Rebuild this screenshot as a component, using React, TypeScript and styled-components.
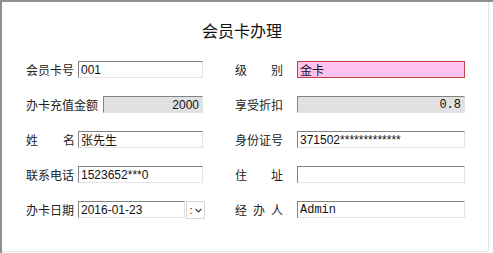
import React from 'react'
import styled, { createGlobalStyle } from 'styled-components'

const GlobalStyle = createGlobalStyle`
  html, body {
    margin: 0;
    padding: 0;
    background: #fff;
  }
  body {
    font-family: "Noto Sans CJK SC", "Liberation Sans", sans-serif;
    font-size: 12px;
    color: #222;
  }
`

const Window = styled.div`
  width: 493px;
  height: 253px;
  box-sizing: border-box;
  border-left: 2px solid #8e8e8e;
  border-top: 2px solid #8e8e8e;
  background: #fff;
`

const Panel = styled.div`
  width: 487px;
  height: 250px;
  box-sizing: border-box;
  border-right: 1px solid #e6e6e6;
  border-bottom: 1px solid #e6e6e6;
  display: flex;
  flex-direction: column;
`

const Title = styled.div`
  padding-top: 19px;
  padding-right: 6px;
  height: 18px;
  line-height: 18px;
  font-size: 16px;
  text-align: center;
  color: #111;
`

const Form = styled.div`
  margin-top: 22px;
  padding-left: 24px;
  display: grid;
  grid-template-columns: 177px 230px;
  column-gap: 32px;
  row-gap: 18px;
`

const Field = styled.div`
  display: flex;
  align-items: center;
  height: 17px;
  min-width: 0;
`

const Label = styled.label<{ $width: number; $gap?: number }>`
  width: ${(p) => p.$width}px;
  flex: none;
  display: flex;
  justify-content: space-between;
  padding-right: ${(p) => p.$gap ?? 3}px;
  box-sizing: border-box;
  line-height: 17px;
  white-space: nowrap;
`

type Tone = 'plain' | 'gray' | 'pink'

const Box = styled.input<{ $tone?: Tone; $align?: 'left' | 'right'; $mono?: boolean }>`
  flex: 1;
  width: 0;
  min-width: 0;
  height: 17px;
  box-sizing: border-box;
  margin: 0;
  padding: 0 3px 0 2px;
  outline: none;
  font-family: ${(p) =>
    p.$mono ? '"Liberation Mono", "Noto Sans CJK SC", monospace' : '"Liberation Sans", "Noto Sans CJK SC", sans-serif'};
  font-size: 12px;
  color: #111;
  text-align: ${(p) => p.$align ?? 'left'};
  background: ${(p) => (p.$tone === 'gray' ? '#e1e1e1' : p.$tone === 'pink' ? '#ffc2f0' : '#fff')};
  border: 1px solid;
  border-color: ${(p) =>
    p.$tone === 'pink' ? '#c0404c' : '#828282 #e3e3e3 #e3e3e3 #828282'};
`

const DateWrap = styled.div`
  flex: 1;
  min-width: 0;
  display: flex;
  gap: 1px;
  margin-right: -2px;
  height: 17px;
`

const DropButton = styled.div`
  width: 19px;
  flex: none;
  height: 18px;
  box-sizing: border-box;
  border: 1px solid #d6d6d6;
  background: #fff;
  display: flex;
  align-items: center;
  justify-content: center;
  gap: 2px;
  font-family: "Liberation Sans", sans-serif;
  font-size: 11px;
  line-height: 1;
  color: #222;
`

const Chevron = () => (
  <svg width="7" height="5" viewBox="0 0 7 5">
    <path d="M0.5 0.8 L3.5 3.8 L6.5 0.8" fill="none" stroke="#333" strokeWidth="1.2" />
  </svg>
)

const App: React.FC = () => {
  return (
    <>
      <GlobalStyle />
      <Window>
        <Panel>
          <Title>会员卡办理</Title>
          <Form>
            <Field>
              <Label $width={52}><span>会员卡号</span></Label>
              <Box readOnly value="001" />
            </Field>
            <Field>
              <Label $width={62} $gap={14}><span>级</span><span>别</span></Label>
              <Box readOnly value="金卡" $tone="pink" />
            </Field>

            <Field>
              <Label $width={77} $gap={5}><span>办卡充值金额</span></Label>
              <Box readOnly value="2000" $tone="gray" $align="right" />
            </Field>
            <Field>
              <Label $width={62} $gap={14}><span>享受折扣</span></Label>
              <Box readOnly value="0.8" $tone="gray" $align="right" $mono />
            </Field>

            <Field>
              <Label $width={52}><span>姓</span><span>名</span></Label>
              <Box readOnly value="张先生" />
            </Field>
            <Field>
              <Label $width={62} $gap={14}><span>身份证号</span></Label>
              <Box readOnly value="371502*************" />
            </Field>

            <Field>
              <Label $width={52}><span>联系电话</span></Label>
              <Box readOnly value="1523652***0" />
            </Field>
            <Field>
              <Label $width={62} $gap={14}><span>住</span><span>址</span></Label>
              <Box readOnly value="" />
            </Field>

            <Field>
              <Label $width={52}><span>办卡日期</span></Label>
              <DateWrap>
                <Box readOnly value="2016-01-23" />
                <DropButton>
                  <span>:</span>
                  <Chevron />
                </DropButton>
              </DateWrap>
            </Field>
            <Field>
              <Label $width={62} $gap={14}><span>经</span><span>办</span><span>人</span></Label>
              <Box readOnly value="Admin" $mono />
            </Field>
          </Form>
        </Panel>
      </Window>
    </>
  )
}

export default App
